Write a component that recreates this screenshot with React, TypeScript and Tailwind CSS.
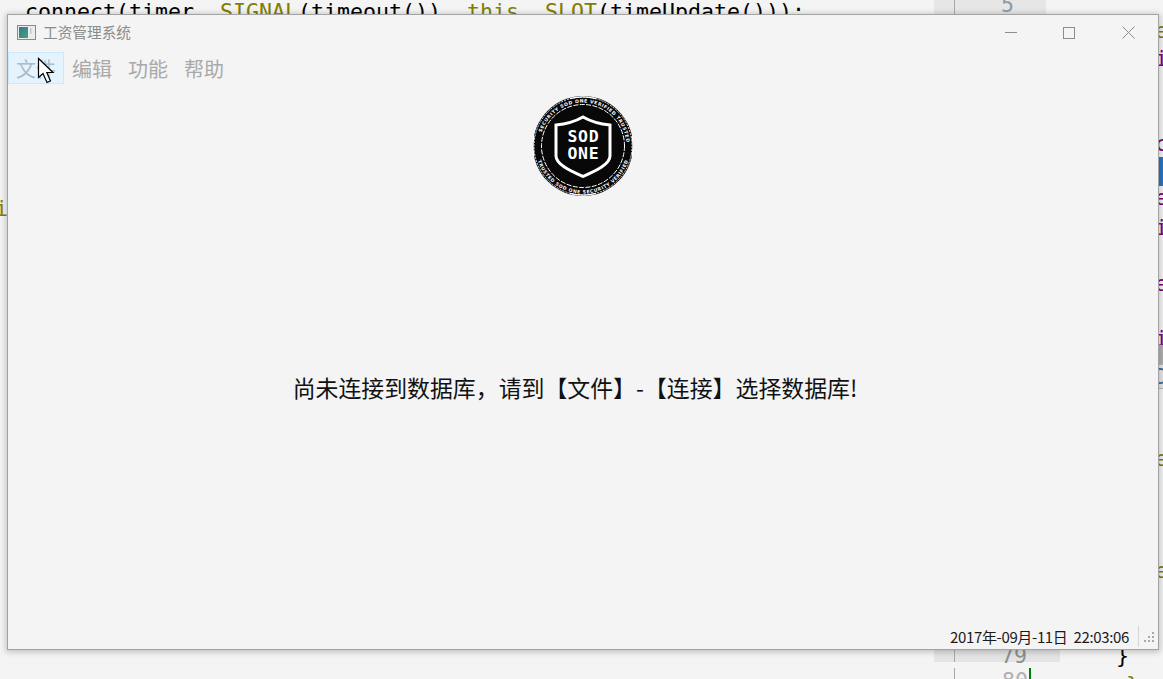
const MONO = "font-['DejaVu_Sans_Mono',monospace]";
const CJK = "font-['Noto_Sans_CJK_SC','Noto_Sans',sans-serif]";

function Logo() {
  return (
    <svg width="100" height="100" viewBox="0 0 100 100" className="block">
      <defs>
        <path id="ringTop" d="M 6.5 50 A 43.5 43.5 0 0 1 93.5 50" />
        <path id="ringBottom" d="M 2.5 50 A 47.5 47.5 0 0 0 97.5 50" />
      </defs>
      <circle cx="50" cy="50" r="50" fill="#080808" />
      <circle cx="50" cy="50" r="49" fill="none" stroke="#fff" strokeWidth="0.9" strokeDasharray="2 1.2" />
      <path d="M37 2.6 A 49 49 0 0 1 63 2.6 M37 97.4 A 49 49 0 0 0 63 97.4 M1 40 A 49 49 0 0 0 1 60 M99 40 A 49 49 0 0 1 99 60" fill="none" stroke="#fff" strokeWidth="1.3" />
      <circle cx="50" cy="50" r="41.5" fill="none" stroke="#fff" strokeWidth="1" strokeDasharray="5 1.4" />
      <text fontSize="4.6" fill="#fff" fontFamily="DejaVu Sans" fontWeight="700" letterSpacing="0.55">
        <textPath href="#ringTop" startOffset="10%">SECURITY SOD ONE VERIFIED TRUSTED</textPath>
      </text>
      <text fontSize="4.6" fill="#fff" fontFamily="DejaVu Sans" fontWeight="700" letterSpacing="0.55">
        <textPath href="#ringBottom" startOffset="10%">TRUSTED SOD ONE SECURITY VERIFIED</textPath>
      </text>
      <path
        d="M50 21 C57 25 66 28 77 29 L77 60 C77 69 60 76 50 80.5 C40 76 23 69 23 60 L23 29 C34 28 43 25 50 21 Z"
        fill="#080808"
        stroke="#fff"
        strokeWidth="3"
        strokeLinejoin="miter"
      />
      <text x="50.5" y="46" textAnchor="middle" fontSize="16.5" fontWeight="700" fill="#fff" fontFamily="DejaVu Sans Mono" letterSpacing="0.8">SOD</text>
      <text x="50.5" y="63" textAnchor="middle" fontSize="16.5" fontWeight="700" fill="#fff" fontFamily="DejaVu Sans Mono" letterSpacing="0.8">ONE</text>
    </svg>
  );
}

function AppIcon() {
  return (
    <svg width="19" height="15" viewBox="0 0 19 15" className="block">
      <defs>
        <linearGradient id="ai" x1="0" y1="0" x2="1" y2="1">
          <stop offset="0" stopColor="#3f6f9f" />
          <stop offset="0.55" stopColor="#3f8f86" />
          <stop offset="1" stopColor="#4f9f6f" />
        </linearGradient>
      </defs>
      <rect x="0.5" y="0.5" width="18" height="14" fill="#e9eded" stroke="#8a8a8a" />
      <rect x="2" y="2" width="9" height="11" fill="url(#ai)" />
      <rect x="13" y="3" width="1.5" height="6" fill="#c2c8cc" />
    </svg>
  );
}

function Cursor() {
  return (
    <svg width="18" height="27" viewBox="0 0 18 27" className="absolute left-[37px] top-[57px]">
      <path d="M1.5 1.5 L1.5 20.5 L6 16.5 L10 25.5 L13.5 24 L9.8 15.5 L16 15.5 Z" fill="#fff" stroke="#000" strokeWidth="1.2" />
    </svg>
  );
}

const RIGHT_ROWS: { h: number; c?: string; color?: string; block?: string }[] = [
  { h: 19 },
  { h: 28, c: "e", color: "#808000" },
  { h: 28, c: "i", color: "#800080" },
  { h: 57 },
  { h: 25, c: "c", color: "#800080" },
  { h: 29, block: "bg-[#2a76c6]" },
  { h: 30, c: "e", color: "#800080" },
  { h: 28, c: "i", color: "#800080" },
  { h: 28 },
  { h: 27, c: "e", color: "#800080" },
  { h: 28 },
  { h: 18, c: "i", color: "#800080" },
  { h: 19, block: "bg-[#b0b0b0]" },
  { h: 25, block: "bg-[#e6e6e6] border-y border-[#b8b8b8]", c: "D", color: "#2a6fa8" },
  { h: 58 },
  { h: 28, c: "e", color: "#808000" },
  { h: 84 },
  { h: 28, c: "e", color: "#808000" },
];

function RightEdge() {
  return (
    <div className={`w-[8px] shrink-0 flex flex-col overflow-hidden text-[21.6px] leading-[28px] ${MONO}`}>
      {RIGHT_ROWS.map((r, i) => (
        <div key={i} className={`shrink-0 overflow-hidden ${r.block ?? ""}`} style={{ height: r.h }}>
          {r.c ? <span className="block -mt-[2px]" style={{ color: r.color }}>{r.c}</span> : null}
        </div>
      ))}
    </div>
  );
}

function Editor() {
  return (
    <div className={`absolute inset-0 flex text-[21.6px] leading-[28px] ${MONO}`}>
      {/* left pane */}
      <div className="w-[934px] shrink-0 flex flex-col">
        <div className="pl-[25px] -mt-[2px] whitespace-pre text-black h-[28px]">
          connect(timer, <span className="text-[#808000]">SIGNAL</span>(timeout()), <span className="text-[#808000]">this</span>, <span className="text-[#808000]">SLOT</span>(timeUpdate()));
        </div>
        <div className="-ml-[5px] mt-[169px] text-[#808000]">i</div>
      </div>
      {/* right pane */}
      <div className="flex-1 flex flex-col">
        <div className="flex h-[14px] w-[112px] bg-[#e6e6e6] shrink-0">
          <span className="w-[21px] border-r border-[#a8a8a8]" />
          <span className="ml-[46px] -mt-[9px] text-[#8a9aa8]">5</span>
        </div>
        <div className="flex-1 ml-[20px] border-l border-[#a8a8a8]" />
        <div className="flex h-[20px] shrink-0 items-start">
          <div className="w-[126px] h-[14px] bg-[#e4e4e4] flex shrink-0">
            <span className="w-[21px] border-r border-[#a8a8a8]" />
            <span className="ml-[46px] -mt-[6px] text-[#8f8f8f] whitespace-pre">79</span>
          </div>
          <span className="ml-[56px] -mt-[6px] text-black">{"}"}</span>
        </div>
        <div className="flex h-[11px] shrink-0 items-start">
          <div className="ml-[20px] w-[1px] h-full bg-[#a8a8a8]" />
          <span className="ml-[47px] -mt-[1px] text-[#b0b0b0]">80</span>
          <div className="ml-[1px] w-[2px] h-full bg-[#008000]" />
          <span className="ml-[95px] mt-[3px] text-[#808000]">{"}"}</span>
        </div>
      </div>
      <div className="absolute right-0 top-0 h-full">
        <RightEdge />
      </div>
    </div>
  );
}

export default function App() {
  return (
    <div className="relative w-[1163px] h-[679px] overflow-hidden bg-[#f4f4f4]">
      <Editor />
      {/* window */}
      <div className="absolute left-[7px] top-[14px] w-[1152px] h-[636px] flex flex-col bg-[#f4f4f4] border border-[#a3a3a3] shadow-[0_1px_6px_1px_rgba(0,0,0,0.22)]">
        {/* title bar */}
        <div className="flex items-center h-[37px] pb-[2px] shrink-0 pl-[9px]">
          <AppIcon />
          <span className={`ml-[7px] text-[14.67px] leading-none text-[#8b8b8b] ${CJK}`}>工资管理系统</span>
          <div className="ml-auto flex h-full items-center pr-[1px]">
            <div className="w-[58px] pr-[2px] flex justify-center">
              <svg width="12" height="12" viewBox="0 0 12 12"><path d="M0 5.5H12" stroke="#8c8c8c" /></svg>
            </div>
            <div className="w-[58px] pr-[2px] flex justify-center">
              <svg width="12" height="12" viewBox="0 0 12 12"><rect x="0.5" y="0.5" width="11" height="11" fill="none" stroke="#8c8c8c" /></svg>
            </div>
            <div className="w-[58px] flex justify-center">
              <svg width="13" height="13" viewBox="0 0 13 13"><path d="M0.5 0.5L12.5 12.5M12.5 0.5L0.5 12.5" stroke="#8c8c8c" /></svg>
            </div>
          </div>
        </div>
        {/* menu */}
        <div className={`flex h-[32px] shrink-0 text-[20px] leading-[34px] text-[#a9a9a9] ${CJK}`}>
          <div className="w-[56px] text-center bg-[#e5f3ff] border border-[#cce8ff] leading-[32px] text-[#a9bcc9]">文件</div>
          <div className="w-[56px] text-center">编辑</div>
          <div className="w-[56px] text-center">功能</div>
          <div className="w-[56px] text-center">帮助</div>
        </div>
        {/* central */}
        <div className="flex-1 flex flex-col items-center">
          <div className="mt-[12px]">
            <Logo />
          </div>
          <p className={`mt-[173px] pr-[16px] text-[22.9px] leading-[36px] text-[#111] ${CJK}`}>尚未连接到数据库，请到【文件】-【连接】选择数据库!</p>
        </div>
        {/* status */}
        <div className="flex items-center justify-end h-[26px] shrink-0 -mt-[26px]">
          <span className={`text-[15px] tracking-[-0.35px] leading-none text-[#1a1a1a] ${CJK}`}>2017年-09月-11日&nbsp;&nbsp;22:03:06</span>
          <div className="ml-[9px] h-[21px] w-px bg-[#d4d4d4]" />
          <svg width="12" height="12" viewBox="0 0 12 12" className="ml-[5px] mr-[2px] mb-[-4px]">
            <g fill="#a8a8a8">
              <rect x="8" y="0" width="2" height="2" />
              <rect x="4" y="4" width="2" height="2" />
              <rect x="8" y="4" width="2" height="2" />
              <rect x="0" y="8" width="2" height="2" />
              <rect x="4" y="8" width="2" height="2" />
              <rect x="8" y="8" width="2" height="2" />
            </g>
          </svg>
        </div>
      </div>
      <Cursor />
    </div>
  );
}
